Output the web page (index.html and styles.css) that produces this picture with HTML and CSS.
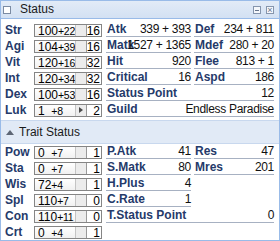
FILE: index.html
```html
<!DOCTYPE html>
<html lang="en">
<head>
    <meta charset="UTF-8">
    <title>Status</title>
    <link rel="stylesheet" href="styles.css">
</head>
<body>
    <div class="window">
        <div class="titlebar">
            <span class="check"></span>
            <span class="title">Status</span>
            <span class="tools">
                <span class="tool min"></span>
                <span class="tool close">&#215;</span>
            </span>
        </div>

        <div class="section">
            <div class="stats">
                <div class="stat"><span class="name">Str</span><span class="box"><span class="val">100<small>+22</small></span><span class="up"></span><span class="cost">16</span></span></div>
                <div class="stat"><span class="name">Agi</span><span class="box"><span class="val">104<small>+39</small></span><span class="up"></span><span class="cost">16</span></span></div>
                <div class="stat"><span class="name">Vit</span><span class="box"><span class="val">120<small>+16</small></span><span class="up"></span><span class="cost">32</span></span></div>
                <div class="stat"><span class="name">Int</span><span class="box"><span class="val">120<small>+34</small></span><span class="up"></span><span class="cost">32</span></span></div>
                <div class="stat"><span class="name">Dex</span><span class="box"><span class="val">100<small>+53</small></span><span class="up"></span><span class="cost">16</span></span></div>
                <div class="stat"><span class="name">Luk</span><span class="box"><span class="val">1 &nbsp;<small>+8</small></span><span class="up"><i class="arrow"></i></span><span class="cost">2</span></span></div>
            </div>
            <div class="info">
                <div class="cell"><b>Atk</b><span>339 + 393</span></div>
                <div class="cell"><b>Def</b><span>234 + 811</span></div>
                <div class="cell"><b>Matk</b><span>1527 + 1365</span></div>
                <div class="cell"><b>Mdef</b><span>280 + 20</span></div>
                <div class="cell"><b>Hit</b><span>920</span></div>
                <div class="cell"><b>Flee</b><span>813 + 1</span></div>
                <div class="cell"><b>Critical</b><span>16</span></div>
                <div class="cell"><b>Aspd</b><span>186</span></div>
                <div class="cell wide"><b>Status Point</b><span>12</span></div>
                <div class="cell wide"><b>Guild</b><span>Endless Paradise</span></div>
            </div>
        </div>

        <div class="band"><i class="tri"></i>Trait Status</div>

        <div class="section trait">
            <div class="stats">
                <div class="stat"><span class="name">Pow</span><span class="box"><span class="val">0 &nbsp;<small>+7</small></span><span class="up"></span><span class="cost">1</span></span></div>
                <div class="stat"><span class="name">Sta</span><span class="box"><span class="val">0 &nbsp;<small>+7</small></span><span class="up"></span><span class="cost">1</span></span></div>
                <div class="stat"><span class="name">Wis</span><span class="box"><span class="val">72<small>+4</small></span><span class="up"></span><span class="cost">1</span></span></div>
                <div class="stat"><span class="name">Spl</span><span class="box"><span class="val">110<small>+7</small></span><span class="up"></span><span class="cost">0</span></span></div>
                <div class="stat"><span class="name">Con</span><span class="box"><span class="val">110<small>+11</small></span><span class="up"></span><span class="cost">0</span></span></div>
                <div class="stat"><span class="name">Crt</span><span class="box"><span class="val">0 &nbsp;<small>+4</small></span><span class="up"></span><span class="cost">1</span></span></div>
            </div>
            <div class="info">
                <div class="cell"><b>P.Atk</b><span>41</span></div>
                <div class="cell"><b>Res</b><span>47</span></div>
                <div class="cell"><b>S.Matk</b><span>80</span></div>
                <div class="cell"><b>Mres</b><span>201</span></div>
                <div class="cell"><b>H.Plus</b><span>4</span></div>
                <div></div>
                <div class="cell"><b>C.Rate</b><span>1</span></div>
                <div></div>
                <div class="cell wide"><b>T.Status Point</b><span>0</span></div>
            </div>
        </div>
    </div>
</body>
</html>
```

FILE: styles.css
```css
body {
    margin: 0;
    font-family: "Liberation Sans", Arial, sans-serif;
    font-size: 12px;
    background-color: #fff;
}
.window {
    width: 278px;
    height: 239px;
    border: 1px solid #99bbe8;
    background-color: #fff;
    overflow: hidden;
}
.titlebar {
    display: flex;
    align-items: center;
    height: 17px;
    border-bottom: 1px solid #99bbe8;
    background: linear-gradient(#e2ebf7, #d3e1f3);
}
.check {
    width: 6px;
    height: 6px;
    margin: 0 9px 0 2px;
    border: 1px solid #7b8ba3;
    background-color: #fff;
}
.title {
    color: #1a1a1a;
    line-height: 17px;
}
.tools {
    display: flex;
    gap: 5px;
    margin-left: auto;
    margin-right: 5px;
}
.tool {
    position: relative;
    width: 6px;
    height: 6px;
    border: 1px solid #8595ad;
    background-color: #f4f7fb;
    color: #66758c;
    font-size: 9px;
    line-height: 6px;
    text-align: center;
}
.min::after {
    content: "";
    position: absolute;
    left: 1px;
    right: 1px;
    top: 3px;
    height: 1px;
    background-color: #66758c;
}
.section {
    display: flex;
    gap: 4px;
    padding: 3px 0 2px 4px;
}
.trait {
    padding-top: 0;
    padding-bottom: 0;
}
.stats {
    display: flex;
    flex-direction: column;
}
.stat {
    display: flex;
    align-items: center;
    height: 16px;
}
.name {
    width: 29px;
    font-weight: bold;
    color: #253a6a;
}
.box {
    display: flex;
    width: 66px;
    height: 11px;
    border: 1px solid #858585;
    background-color: #fff;
    line-height: 12px;
}
.val {
    width: 37px;
    padding-left: 3px;
    white-space: nowrap;
    background: linear-gradient(#fff, #f1f1f1);
}
.val small {
    font-size: 10.5px;
    letter-spacing: -0.3px;
}
.up {
    display: flex;
    align-items: center;
    justify-content: center;
    width: 10px;
    border-left: 1px solid #c4c4c4;
    border-right: 1px solid #9a9a9a;
    background-color: #ececec;
}
.arrow {
    width: 0;
    height: 0;
    border-left: 4px solid #4a4a4a;
    border-top: 3px solid transparent;
    border-bottom: 3px solid transparent;
}
.cost {
    flex: 1;
    padding-right: 1px;
    text-align: right;
}
.info {
    display: grid;
    grid-template-columns: 85px 80px;
    grid-auto-rows: 16px;
    column-gap: 3px;
}
.cell {
    display: grid;
    height: 14px;
    line-height: 15px;
    border-bottom: 1px solid #a7b1c2;
    white-space: nowrap;
}
.cell b, .cell span {
    grid-area: 1 / 1;
}
.cell b {
    padding-left: 1px;
    color: #253a6a;
}
.cell span {
    justify-self: end;
    letter-spacing: -0.3px;
    color: #111;
}
.wide {
    grid-column: span 2;
}
.band {
    display: flex;
    align-items: center;
    height: 22px;
    border-top: 1px solid #c8d8ee;
    border-bottom: 1px solid #c8d8ee;
    background-color: #e1eaf6;
    color: #1a1a1a;
}
.tri {
    width: 0;
    height: 0;
    margin: 0 5px 0 5px;
    border-bottom: 5px solid #5d6675;
    border-left: 4px solid transparent;
    border-right: 4px solid transparent;
}
```
